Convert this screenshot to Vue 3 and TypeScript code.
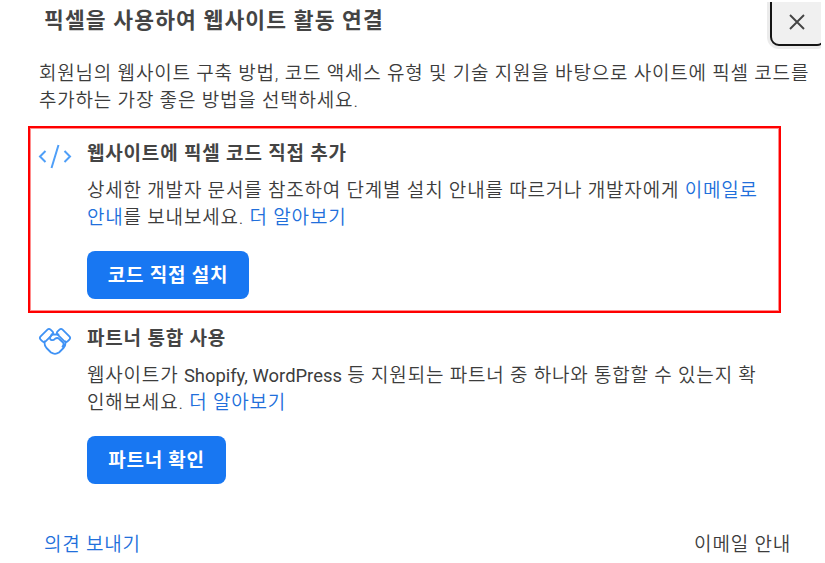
<script setup lang="ts">
</script>

<template>
  <main class="dialog">
    <header class="head">
      <h1>픽셀을 사용하여 웹사이트 활동 연결</h1>
      <div class="corner">
        <button class="close" aria-label="닫기">
          <svg width="16" height="16" viewBox="0 0 16 16"><path d="M1 1 15 15M15 1 1 15" fill="none" stroke="#444" stroke-width="1.900" /></svg>
        </button>
      </div>
    </header>
    <p class="intro">
      <span class="ln">회원님의 웹사이트 구축 방법, 코드 액세스 유형 및 기술 지원을 바탕으로 사이트에 픽셀 코드를</span>
      <span class="ln">추가하는 가장 좋은 방법을 선택하세요.</span>
    </p>
    <section class="option boxed">
      <svg class="icon" width="34" height="28" viewBox="0 0 34 28"><path d="M7.500 9 2 14.500l5.500 5.500M26.500 9 32 14.500 26.500 20M20.500 3 13.500 26" fill="none" stroke="#4f9ff8" stroke-width="2" /></svg>
      <div class="body">
        <h2>웹사이트에 픽셀 코드 직접 추가</h2>
        <p>
          <span class="ln">상세한 개발자 문서를 참조하여 단계별 설치 안내를 따르거나 개발자에게 <a>이메일로</a></span>
          <span class="ln"><a>안내</a>를 보내보세요. <a>더 알아보기</a></span>
        </p>
        <button class="primary wide">코드 직접 설치</button>
      </div>
    </section>
    <section class="option">
      <svg class="icon" width="34" height="28" viewBox="0 0 34 28">
        <g fill="none" stroke="#3f92f5" stroke-width="1.800" stroke-linejoin="round" stroke-linecap="round">
          <rect x="1.500" y="5" width="14" height="7" rx="2.200" transform="rotate(-45 8.500 8.500)" />
          <rect x="18.500" y="5" width="14" height="7" rx="2.200" transform="rotate(45 25.500 8.500)" />
          <path d="M13.500 7.500h7M6.500 14.500c-.3 2.500.3 4.500 2 6.500l4.500 4.500q4 2.600 8 0l4.500-4.500c2-2 2.300-4 2-6.500M13.500 7.500l-1.500 3.500c0 2.500 3.200 2.800 5 .8q2.500-1.600 4.200.2l3.800 3.500q1.300 2-.5 4" />
        </g>
      </svg>
      <div class="body">
        <h2>파트너 통합 사용</h2>
        <p>
          <span class="ln">웹사이트가 <span class="latin">Shopify, WordPress</span> 등 지원되는 파트너 중 하나와 통합할 수 있는지 확</span>
          <span class="ln">인해보세요. <a>더 알아보기</a></span>
        </p>
        <button class="primary">파트너 확인</button>
      </div>
    </section>
    <footer class="foot"><a>의견 보내기</a><span>이메일 안내</span></footer>
  </main>
</template>

<style>
body { margin: 0; background: #fff; }
</style>
<style scoped>
.dialog { box-sizing: border-box; width: 825px; height: 563px; overflow: hidden; font-family: Roboto, "Noto Sans CJK KR", sans-serif; font-size: 19px; font-weight: 350; letter-spacing: 0.810px; line-height: 27px; color: #3c3c3c; }
h1, h2, p { margin: 0; }
.ln { display: block; width: max-content; white-space: nowrap; }
.latin { font-size: 18.400px; font-weight: 400; letter-spacing: 0; }
.head { display: flex; justify-content: space-between; height: 60px; padding: 0 4px 0 44px; }
h1 { font-size: 21.500px; letter-spacing: 1.150px; line-height: 41px; color: #444; white-space: nowrap; }
.corner { box-sizing: border-box; width: 55px; height: 52px; margin-top: 2px; padding-left: 4px; overflow: hidden; }
.close { box-sizing: border-box; width: 56px; height: 60px; margin: -16px 0 0; border: 2px solid #151515; border-radius: 9px; box-shadow: 0 0 0 3px #ebebeb; background: #f0f0f0; display: flex; align-items: flex-end; justify-content: center; padding: 0 2px 14px 0; }
.intro { height: 66px; padding-left: 39px; }
.option { box-sizing: border-box; display: flex; width: 753px; height: 186px; margin-left: 28px; padding: 12px 0 0 10px; }
.boxed { height: 187px; border: 2px solid #f00; box-shadow: inset 0 0 0 1px rgba(255, 0, 0, 0.45); padding: 12px 0 0 8px; }
.icon { flex: none; width: 34px; height: 28px; margin: 2px 15px 0 0; }
h2 { font-size: 19px; line-height: 27px; margin-bottom: 10px; color: #444; }
a { color: #216fdb; }
.primary { display: block; height: 48px; width: 139px; margin-top: 20px; padding: 0 0 4px; border: 0; border-radius: 8px; background: #1877f2; color: #fff; font: 700 19px Roboto, "Noto Sans CJK KR", sans-serif; letter-spacing: 0.760px; }
.wide { width: 162px; }
.foot { display: flex; justify-content: space-between; padding: 32px 34px 0 44px; }
</style>
